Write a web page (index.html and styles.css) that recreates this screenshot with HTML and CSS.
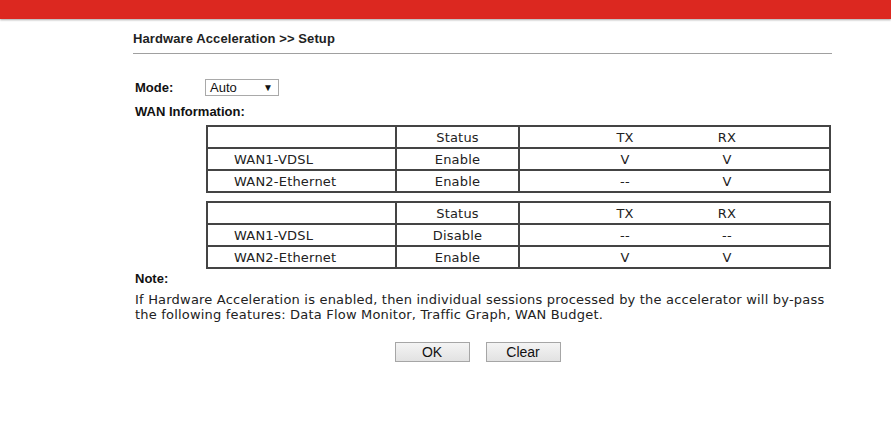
FILE: index.html
```html
<!DOCTYPE html>
<html lang="en">
<head>
  <meta charset="UTF-8">
  <title>Hardware Acceleration</title>
  <link rel="stylesheet" href="styles.css">
</head>
<body>

  <div class="top-bar"></div>

  <div class="page">
    <div class="page-title">Hardware Acceleration &gt;&gt; Setup</div>

    <div class="mode-row">
      <span class="label">Mode:</span>
      <div class="select-box">
        <span>Auto</span>
        <span class="arrow">&#9660;</span>
      </div>
    </div>

    <div class="label wan-title">WAN Information:</div>

    <table class="wan-table">
      <tr>
        <td class="col-name"></td>
        <td class="col-status">Status</td>
        <td class="col-dir"><span class="dir">TX</span><span class="dir">RX</span></td>
      </tr>
      <tr>
        <td class="col-name">WAN1-VDSL</td>
        <td class="col-status">Enable</td>
        <td class="col-dir"><span class="dir">V</span><span class="dir">V</span></td>
      </tr>
      <tr>
        <td class="col-name">WAN2-Ethernet</td>
        <td class="col-status">Enable</td>
        <td class="col-dir"><span class="dir">--</span><span class="dir">V</span></td>
      </tr>
    </table>

    <table class="wan-table">
      <tr>
        <td class="col-name"></td>
        <td class="col-status">Status</td>
        <td class="col-dir"><span class="dir">TX</span><span class="dir">RX</span></td>
      </tr>
      <tr>
        <td class="col-name">WAN1-VDSL</td>
        <td class="col-status">Disable</td>
        <td class="col-dir"><span class="dir">--</span><span class="dir">--</span></td>
      </tr>
      <tr>
        <td class="col-name">WAN2-Ethernet</td>
        <td class="col-status">Enable</td>
        <td class="col-dir"><span class="dir">V</span><span class="dir">V</span></td>
      </tr>
    </table>

    <div class="note">
      <div class="note-title">Note:</div>
      <p>If Hardware Acceleration is enabled, then individual sessions processed by the accelerator will by-pass the following features: Data Flow Monitor, Traffic Graph, WAN Budget.</p>
    </div>

    <div class="buttons">
      <button type="button" class="btn">OK</button>
      <button type="button" class="btn">Clear</button>
    </div>
  </div>

</body>
</html>
```

FILE: styles.css
```css
body {
  margin: 0;
  padding: 0;
  background-color: #ffffff;
  font-family: "Liberation Sans", Arial, sans-serif;
  color: #000;
}
.top-bar {
  height: 19px;
  background-color: #dc2820;
  box-shadow: 0 1px 2px rgba(0, 0, 0, 0.35);
}
.page {
  margin-left: 133px;
  width: 699px;
}
.page-title {
  font-size: 13px;
  line-height: 15px;
  font-weight: bold;
  letter-spacing: 0.1px;
  color: #222;
  padding-top: 12px;
  padding-bottom: 7px;
  border-bottom: 1px solid #a0a0a0;
}
.label {
  font-size: 13px;
  line-height: 15px;
  font-weight: bold;
  color: #111;
}
.mode-row {
  display: flex;
  align-items: center;
  margin-top: 25px;
  padding-left: 2px;
}
.mode-row .label {
  width: 70px;
}
.select-box {
  width: 74px;
  height: 17px;
  box-sizing: border-box;
  border: 1px solid #a9a9a9;
  display: flex;
  align-items: center;
  justify-content: space-between;
  padding: 0 5px 0 4px;
  font-size: 13px;
  color: #111;
}
.select-box .arrow {
  font-size: 10px;
}
.wan-title {
  margin-top: 8px;
  padding-left: 2px;
}
.wan-table {
  border-collapse: collapse;
  margin-left: 73px;
  width: 625px;
  margin-top: 6px;
  font-family: "DejaVu Sans", Verdana, sans-serif;
  font-size: 13px;
  letter-spacing: 0.2px;
  color: #222;
}
.wan-table + .wan-table {
  margin-top: 8px;
}
.wan-table td {
  border: 2px solid #444;
  height: 20px;
  padding: 0;
}
.col-name {
  width: 161px;
  padding-left: 26px !important;
}
.col-status {
  width: 121px;
  text-align: center;
}
.col-dir {
  text-align: center;
  padding-left: 3px !important;
}
.dir {
  display: inline-block;
  width: 102px;
}
.note {
  margin-top: 2px;
  padding-left: 2px;
}
.note-title {
  font-size: 13px;
  line-height: 15px;
  font-weight: bold;
  color: #111;
}
.note p {
  margin: 6px 0 0 0;
  font-family: "DejaVu Sans", Verdana, sans-serif;
  font-size: 13px;
  letter-spacing: 0.2px;
  line-height: 15px;
  color: #222;
}
.buttons {
  display: flex;
  justify-content: center;
  gap: 16px;
  margin-top: 20px;
  padding-right: 10px;
}
.btn {
  width: 75px;
  height: 20px;
  font-family: "Liberation Sans", Arial, sans-serif;
  font-size: 14px;
  color: #111;
  background: linear-gradient(#f4f4f4, #e2e2e2);
  border: 1px solid #a6a6a6;
  border-radius: 0;
  padding: 0;
}
```
